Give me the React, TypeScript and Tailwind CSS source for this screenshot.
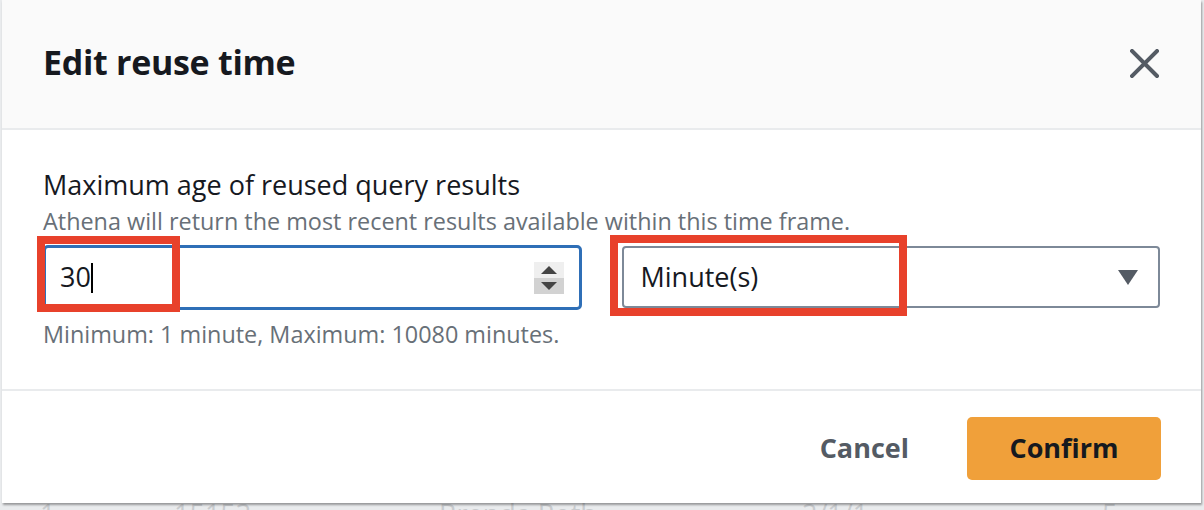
export default function App() {
  return (
    <div
      className="relative w-[1204px] h-[510px] overflow-hidden bg-[#e9ebed] pl-[2px]"
      style={{ fontFamily: '"Open Sans", "Noto Sans", sans-serif' }}
    >
      <div className="relative z-10 w-[1199px] h-[503px] bg-white flex flex-col shadow-[1px_2px_2px_rgba(0,0,0,0.35)]">
        {/* Header */}
        <div className="h-[130px] shrink-0 bg-[#fafafa] border-b-2 border-[#e9ebed] flex items-center justify-between pl-[41px] pr-[42px]">
          <h1 className="text-[34px] font-bold text-[#16191f] tracking-[-0.3px] pb-[4px]">Edit reuse time</h1>
          <svg width="29" height="29" viewBox="0 0 29 29" className="mb-[2px]">
            <path d="M2 2 L27 27 M27 2 L2 27" stroke="#545b64" strokeWidth="4" strokeLinecap="square" />
          </svg>
        </div>

        {/* Body */}
        <div className="px-[41px] pt-[38px] flex-1">
          <div className="text-[27px] leading-[34px] text-[#16191f]">Maximum age of reused query results</div>
          <div className="mt-[4px] text-[23.4px] leading-[30px] text-[#687078]">
            Athena will return the most recent results available within this time frame.
          </div>

          <div className="flex gap-[40px] mt-[9px]">
            {/* Number input */}
            <div className="relative w-[539px] h-[65px] border-[3px] border-[#2f6fb7] rounded-[5px] flex items-center pl-[14px] pr-[15px]">
              <span className="text-[27px] text-[#16191f]">30</span>
              <span className="w-[2px] h-[30px] bg-black" />
              <div className="ml-auto flex flex-col w-[30px]">
                <div className="h-[16px] bg-[#efefef] flex items-center justify-center">
                  <div className="w-0 h-0 border-l-[8px] border-r-[8px] border-b-[8px] border-l-transparent border-r-transparent border-b-[#444]" />
                </div>
                <div className="h-[16px] bg-[#d2d2d2] flex items-center justify-center">
                  <div className="w-0 h-0 border-l-[8px] border-r-[8px] border-t-[8px] border-l-transparent border-r-transparent border-t-[#444]" />
                </div>
              </div>
              <div className="absolute left-[-9px] top-[-12px] w-[143px] h-[76px] border-[8px] border-[#e8412b]" />
            </div>

            {/* Select */}
            <div className="relative w-[539px] h-[62px] mt-[1px] border-2 border-[#7d8998] rounded-[4px] flex items-center pl-[17px] pr-[20px]">
              <span className="text-[27px] text-[#16191f]">Minute(s)</span>
              <div className="ml-auto w-0 h-0 border-l-[10px] border-r-[10px] border-t-[15px] border-l-transparent border-r-transparent border-t-[#545b64]" />
              <div className="absolute left-[-14px] top-[-13px] w-[297px] h-[81px] border-[8px] border-[#e8412b]" />
            </div>
          </div>

          <div className="mt-[9px] text-[23.4px] leading-[30px] text-[#687078]">
            Minimum: 1 minute, Maximum: 10080 minutes.
          </div>
        </div>

        {/* Footer */}
        <div className="h-[114px] shrink-0 border-t-2 border-[#e9ebed] flex items-center justify-end gap-[58px] pr-[40px] pt-[2px]">
          <button className="text-[27px] font-bold text-[#545b64]">Cancel</button>
          <button className="w-[194px] h-[63px] rounded-[5px] bg-[#f0a03a] text-[27px] font-bold text-[#16191f]">
            Confirm
          </button>
        </div>
      </div>

      {/* table row behind the modal, only its top shows */}
      <div className="flex h-[30px] text-[27px] leading-[30px] text-[#c9cccf] mt-[-4px] pl-[38px]">
        <span className="w-[134px]">1</span>
        <span className="w-[265px]">15153</span>
        <span className="w-[363px]">Brenda Roth</span>
        <span className="w-[300px]">2/1/1</span>
        <span>5</span>
      </div>
    </div>
  )
}
